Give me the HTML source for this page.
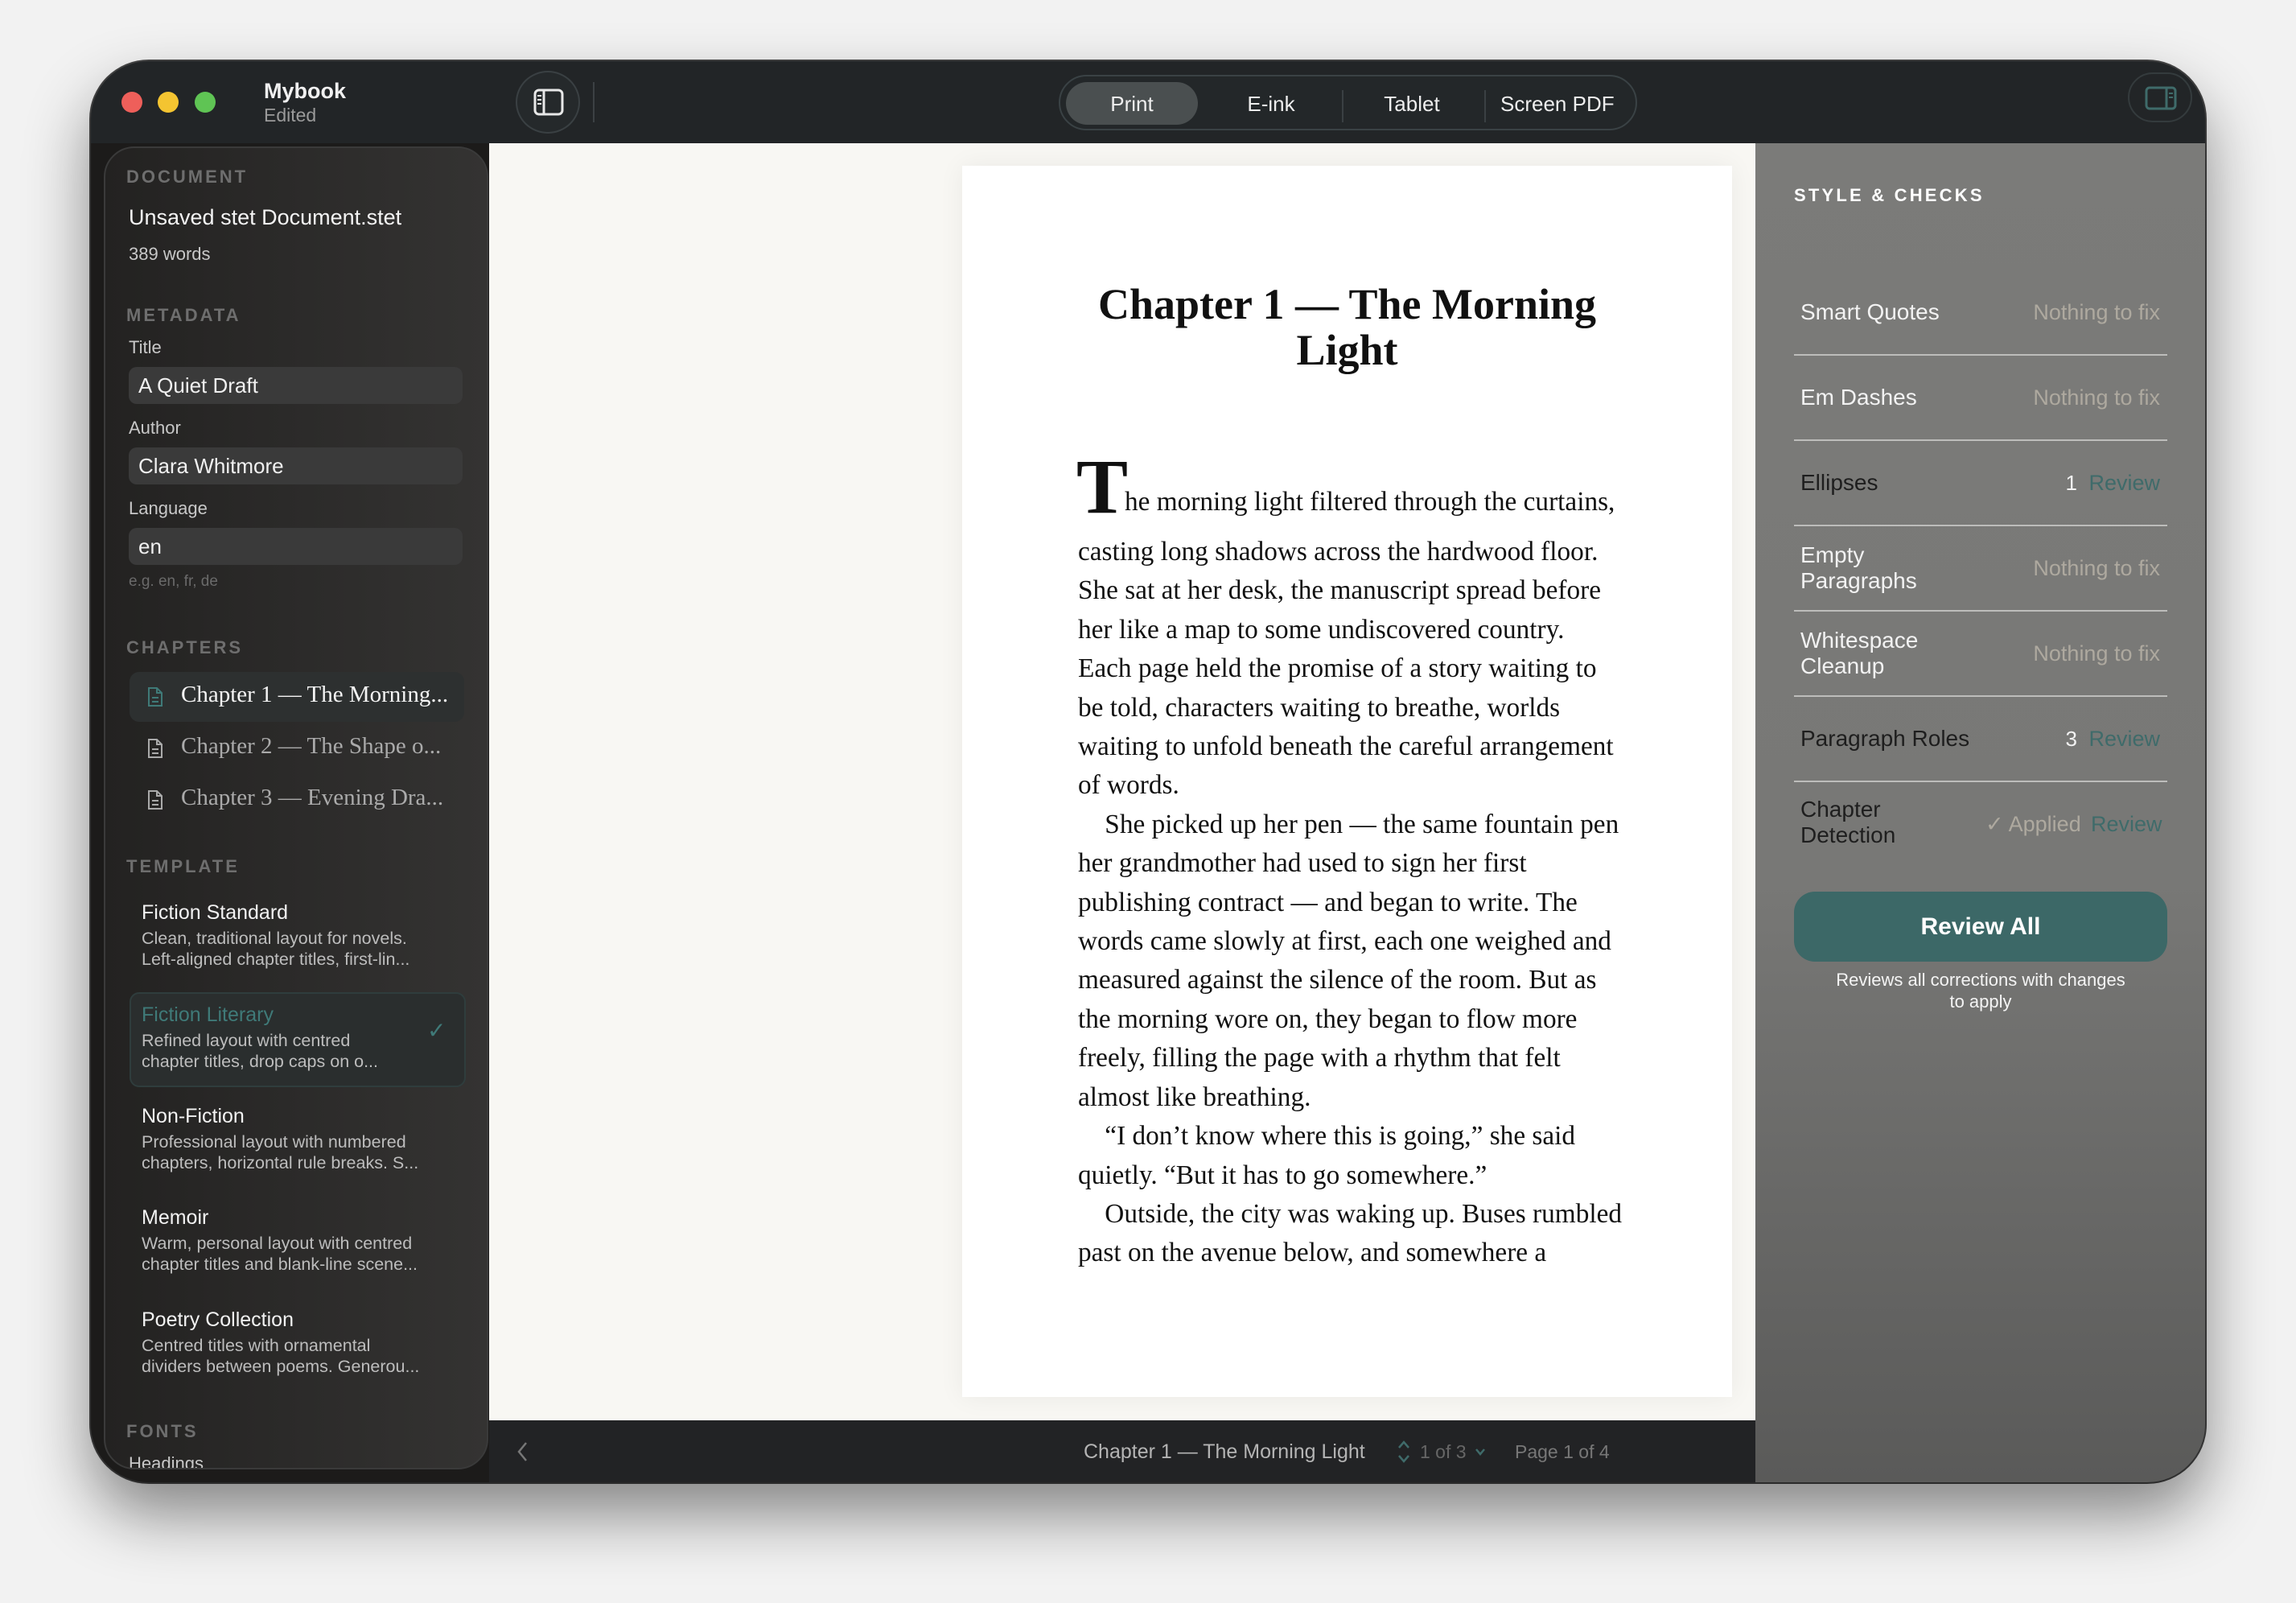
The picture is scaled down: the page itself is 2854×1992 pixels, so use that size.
<!DOCTYPE html>
<html><head><meta charset="utf-8"><style>
*{margin:0;padding:0;box-sizing:border-box}
body{width:2854px;height:1992px;background:#f2f2f2;font-family:"Liberation Sans",sans-serif;position:relative;overflow:hidden}
.a{position:absolute;white-space:nowrap}
#win{position:absolute;left:113px;top:76px;width:2628px;height:1766px;border-radius:72px;background:#222527;overflow:hidden;box-shadow:0 40px 80px rgba(0,0,0,.45),0 0 0 2px #444}
.lbl{font-size:22px;letter-spacing:3px;font-weight:bold;color:#6e6e6e}
.inp{position:absolute;left:29px;width:415px;height:46px;border-radius:10px;background:#3a3a3a;color:#f0f0f0;font-size:26px;line-height:46px;padding-left:12px}
.sm{font-size:22px;color:#c8c8c8}
.ch{font-family:"Liberation Serif",serif;font-size:29px}
.tt{font-size:25px;color:#f2f2f2}
.td{font-size:21.5px;color:#bdbdbd;line-height:26px}
.row{position:absolute;left:2230px;width:464px;border-bottom:2px solid #bdbdbb}
.rl{font-size:28px;color:#1e1e1e;line-height:32px}
.nf{font-size:27px;color:#aea99f}
.rv{font-size:27px;color:#3f6b6a}
.body{font-family:"Liberation Serif",serif;font-size:33.3px;color:#111;line-height:48.4px}
</style></head><body>
<div id="win">
 <div class="a" style="left:38px;top:38px;width:26px;height:26px;border-radius:50%;background:#ee5f5a"></div>
 <div class="a" style="left:83px;top:38px;width:26px;height:26px;border-radius:50%;background:#f4c431"></div>
 <div class="a" style="left:129px;top:38px;width:26px;height:26px;border-radius:50%;background:#5fc454"></div>
 <div class="a" style="left:215px;top:22px;font-size:27px;font-weight:bold;color:#f0f0f0">Mybook</div>
 <div class="a" style="left:215px;top:54px;font-size:23px;color:#9a9a9a">Edited</div>
 <div class="a" style="left:528px;top:12px;width:80px;height:78px;border-radius:50%;border:2px solid #3a4043;background:#25292b"></div>
 <svg class="a" style="left:550px;top:34px" width="38" height="34" viewBox="0 0 38 34"><rect x="2" y="2" width="34" height="30" rx="5" fill="none" stroke="#e8e8e8" stroke-width="3"/><line x1="13" y1="2" x2="13" y2="32" stroke="#e8e8e8" stroke-width="3"/><line x1="5" y1="9" x2="10" y2="9" stroke="#e8e8e8" stroke-width="2"/><line x1="5" y1="14" x2="10" y2="14" stroke="#e8e8e8" stroke-width="2"/><line x1="5" y1="19" x2="10" y2="19" stroke="#e8e8e8" stroke-width="2"/></svg>
 <div class="a" style="left:624px;top:26px;width:2px;height:50px;background:#3c4144"></div>
 <div class="a" style="left:1203px;top:17px;width:719px;height:69px;border-radius:35px;border:2px solid #3a4245;background:#232729"></div>
 <div class="a" style="left:1212px;top:26px;width:164px;height:53px;border-radius:27px;background:#4a4f50"></div>
 <div class="a" style="left:1555px;top:36px;width:2px;height:40px;background:#3a4043"></div>
 <div class="a" style="left:1732px;top:36px;width:2px;height:40px;background:#3a4043"></div>
 <div class="a" style="left:1212px;top:38px;width:164px;text-align:center;font-size:26px;color:#eee">Print</div>
 <div class="a" style="left:1417px;top:38px;width:100px;text-align:center;font-size:26px;color:#eee">E-ink</div>
 <div class="a" style="left:1592px;top:38px;width:100px;text-align:center;font-size:26px;color:#eee">Tablet</div>
 <div class="a" style="left:1752px;top:38px;width:140px;text-align:center;font-size:26px;color:#eee">Screen PDF</div>
 <div class="a" style="left:2532px;top:14px;width:80px;height:62px;border-radius:40px;border:2px solid #343b3d"></div>
 <svg class="a" style="left:2553px;top:31px" width="40" height="30" viewBox="0 0 40 30"><rect x="2" y="2" width="36" height="26" rx="4" fill="none" stroke="#3f6b6a" stroke-width="3"/><line x1="27" y1="2" x2="27" y2="28" stroke="#3f6b6a" stroke-width="3"/><line x1="30" y1="9" x2="35" y2="9" stroke="#3f6b6a" stroke-width="2"/><line x1="30" y1="14" x2="35" y2="14" stroke="#3f6b6a" stroke-width="2"/></svg>

 <div class="a" style="left:495px;top:102px;width:1574px;height:1587px;background:#f8f7f3"></div>
 <div class="a" style="left:1083px;top:130px;width:957px;height:1530px;background:#fff;box-shadow:0 0 30px rgba(0,0,0,.06)"></div>
 <div class="a" style="left:1083px;top:274px;width:957px;text-align:center;font-family:'Liberation Serif',serif;font-weight:bold;font-size:54px;line-height:57px;color:#111;white-space:normal">Chapter 1 — The Morning<br>Light</div>
 <div class="a" style="left:1225px;top:481px;font-family:'Liberation Serif',serif;font-weight:bold;font-size:96px;line-height:96px;color:#111">T</div>
 <div class="a body" style="left:1285px;top:524px">he morning light filtered through the curtains,</div>
 <div class="a body" style="left:1227px;top:586px">casting long shadows across the hardwood floor.<br>She sat at her desk, the manuscript spread before<br>her like a map to some undiscovered country.<br>Each page held the promise of a story waiting to<br>be told, characters waiting to breathe, worlds<br>waiting to unfold beneath the careful arrangement<br>of words.<br>&nbsp;&nbsp;&nbsp;&nbsp;She picked up her pen — the same fountain pen<br>her grandmother had used to sign her first<br>publishing contract — and began to write. The<br>words came slowly at first, each one weighed and<br>measured against the silence of the room. But as<br>the morning wore on, they began to flow more<br>freely, filling the page with a rhythm that felt<br>almost like breathing.<br>&nbsp;&nbsp;&nbsp;&nbsp;“I don’t know where this is going,” she said<br>quietly. “But it has to go somewhere.”<br>&nbsp;&nbsp;&nbsp;&nbsp;Outside, the city was waking up. Buses rumbled<br>past on the avenue below, and somewhere a</div>

 <div class="a" style="left:495px;top:1689px;width:1574px;height:77px;background:#222325"></div>
 <svg class="a" style="left:528px;top:1714px" width="16" height="28" viewBox="0 0 16 28"><path d="M13 3 L4 14 L13 25" fill="none" stroke="#777" stroke-width="2.5"/></svg>
 <div class="a" style="left:1234px;top:1714px;font-size:25px;color:#b4b4b4">Chapter 1 — The Morning Light</div>
 <svg class="a" style="left:1622px;top:1712px" width="20" height="32" viewBox="0 0 20 32"><path d="M4 11 L10 4 L16 11 M4 21 L10 28 L16 21" fill="none" stroke="#3f6b6a" stroke-width="2.5"/></svg>
 <div class="a" style="left:1652px;top:1715px;font-size:23px;color:#666">1 of 3</div>
 <svg class="a" style="left:1719px;top:1722px" width="16" height="12" viewBox="0 0 16 12"><path d="M3 3 L8 9 L13 3" fill="none" stroke="#3f6b6a" stroke-width="2.5"/></svg>
 <div class="a" style="left:1770px;top:1715px;font-size:23px;color:#777">Page 1 of 4</div>

 <div class="a" style="left:0;top:102px;width:495px;height:1664px;background:#1c1b1a"></div>
 <div class="a" style="left:16px;top:106px;width:478px;height:1644px;border-radius:38px;border:2px solid #3a3a3a;background:linear-gradient(90deg,#232221,#343332);overflow:hidden">
  <div class="a lbl" style="left:26px;top:23px">DOCUMENT</div>
  <div class="a" style="left:29px;top:71px;font-size:27px;color:#f4f4f4">Unsaved stet Document.stet</div>
  <div class="a sm" style="left:29px;top:119px">389 words</div>
  <div class="a lbl" style="left:26px;top:195px">METADATA</div>
  <div class="a sm" style="left:29px;top:235px">Title</div>
  <div class="inp" style="top:272px">A Quiet Draft</div>
  <div class="a sm" style="left:29px;top:335px">Author</div>
  <div class="inp" style="top:372px">Clara Whitmore</div>
  <div class="a sm" style="left:29px;top:435px">Language</div>
  <div class="inp" style="top:472px">en</div>
  <div class="a" style="left:29px;top:528px;font-size:19px;color:#6a6a6a">e.g. en, fr, de</div>
  <div class="a lbl" style="left:26px;top:608px">CHAPTERS</div>
  <div class="a" style="left:30px;top:651px;width:416px;height:62px;border-radius:12px;background:#2d3030"></div>
  <svg class="a" style="left:51px;top:668px" width="22" height="28" viewBox="0 0 22 28"><path d="M3 3 H13 L19 9 V25 H3 Z M13 3 V9 H19 M7 15 H15 M7 20 H15" fill="none" stroke="#3f7a78" stroke-width="2"/></svg>
  <div class="a ch" style="left:94px;top:663px;color:#f4f4f4">Chapter 1 — The Morning...</div>
  <svg class="a" style="left:51px;top:732px" width="22" height="28" viewBox="0 0 22 28"><path d="M3 3 H13 L19 9 V25 H3 Z M13 3 V9 H19 M7 15 H15 M7 20 H15" fill="none" stroke="#aaa" stroke-width="2"/></svg>
  <div class="a ch" style="left:94px;top:727px;color:#aaa">Chapter 2 — The Shape o...</div>
  <svg class="a" style="left:51px;top:796px" width="22" height="28" viewBox="0 0 22 28"><path d="M3 3 H13 L19 9 V25 H3 Z M13 3 V9 H19 M7 15 H15 M7 20 H15" fill="none" stroke="#aaa" stroke-width="2"/></svg>
  <div class="a ch" style="left:94px;top:791px;color:#aaa">Chapter 3 — Evening Dra...</div>
  <div class="a lbl" style="left:26px;top:880px">TEMPLATE</div>
  <div class="a tt" style="left:45px;top:936px">Fiction Standard</div>
  <div class="a td" style="left:45px;top:969px">Clean, traditional layout for novels.<br>Left-aligned chapter titles, first-lin...</div>
  <div class="a" style="left:30px;top:1049px;width:418px;height:118px;border-radius:12px;border:2px solid #2f3d3d;background:#2a2e2e"></div>
  <div class="a tt" style="left:45px;top:1063px;color:#3f7a78">Fiction Literary</div>
  <div class="a td" style="left:45px;top:1096px">Refined layout with centred<br>chapter titles, drop caps on o...</div>
  <div class="a" style="left:400px;top:1080px;font-size:28px;color:#3f7a78">✓</div>
  <div class="a tt" style="left:45px;top:1189px">Non-Fiction</div>
  <div class="a td" style="left:45px;top:1222px">Professional layout with numbered<br>chapters, horizontal rule breaks. S...</div>
  <div class="a tt" style="left:45px;top:1315px">Memoir</div>
  <div class="a td" style="left:45px;top:1348px">Warm, personal layout with centred<br>chapter titles and blank-line scene...</div>
  <div class="a tt" style="left:45px;top:1442px">Poetry Collection</div>
  <div class="a td" style="left:45px;top:1475px">Centred titles with ornamental<br>dividers between poems. Generou...</div>
  <div class="a lbl" style="left:26px;top:1582px">FONTS</div>
  <div class="a sm" style="left:29px;top:1622px">Headings</div>
 </div>

 <div class="a" style="left:2069px;top:102px;width:559px;height:1664px;background:linear-gradient(180deg,#7b7b79 0%,#787876 55%,#5a5a59 100%)"></div>
</div>
<div class="a" style="left:2230px;top:230px;font-size:22px;font-weight:bold;letter-spacing:3.2px;color:#fff">STYLE &amp; CHECKS</div>
<div class="row" style="top:336px;height:106px"><div class="a rl" style="left:8px;top:36px;color:#f2f2f2">Smart Quotes</div><div class="a nf" style="right:9px;top:37px">Nothing to fix</div></div>
<div class="row" style="top:442px;height:106px"><div class="a rl" style="left:8px;top:36px;color:#f2f2f2">Em Dashes</div><div class="a nf" style="right:9px;top:37px">Nothing to fix</div></div>
<div class="row" style="top:548px;height:106px"><div class="a rl" style="left:8px;top:36px">Ellipses</div><div class="a" style="right:112px;top:37px;font-size:26px;color:#f2f2f2">1</div><div class="a rv" style="right:9px;top:37px">Review</div></div>
<div class="row" style="top:654px;height:106px"><div class="a rl" style="left:8px;top:20px;color:#f2f2f2">Empty<br>Paragraphs</div><div class="a nf" style="right:9px;top:37px">Nothing to fix</div></div>
<div class="row" style="top:760px;height:106px"><div class="a rl" style="left:8px;top:20px;color:#f2f2f2">Whitespace<br>Cleanup</div><div class="a nf" style="right:9px;top:37px">Nothing to fix</div></div>
<div class="row" style="top:866px;height:106px"><div class="a rl" style="left:8px;top:36px">Paragraph Roles</div><div class="a" style="right:112px;top:37px;font-size:26px;color:#f2f2f2">3</div><div class="a rv" style="right:9px;top:37px">Review</div></div>
<div class="a" style="left:2238px;top:990px;font-size:28px;line-height:32px;color:#1e1e1e">Chapter<br>Detection</div>
<div class="a nf" style="left:2468px;top:1009px">✓ Applied</div>
<div class="a rv" style="left:2599px;top:1009px">Review</div>
<div class="a" style="left:2230px;top:1108px;width:464px;height:87px;border-radius:26px;background:#3c6867;color:#fff;font-size:30px;font-weight:bold;text-align:center;line-height:87px">Review All</div>
<div class="a" style="left:2230px;top:1204px;width:464px;text-align:center;font-size:22px;line-height:27px;color:#f4f4f4;white-space:normal">Reviews all corrections with changes<br>to apply</div>
</body></html>
